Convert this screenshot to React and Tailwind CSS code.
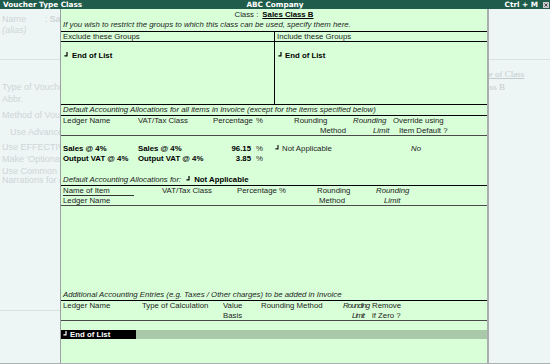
import React from "react";

function Ret() {
  return (
    <svg width="4" height="5" viewBox="0 0 4 5" className="inline-block shrink-0 self-start mt-[1px]">
      <path d="M3 0V3.8H0.4" fill="none" stroke="currentColor" strokeWidth="1.2" />
    </svg>
  );
}

function TitleBar() {
  return (
    <div className="h-[9px] shrink-0 bg-[#1f5c4b] text-white font-['DejaVu_Sans',sans-serif] font-bold text-[7.3px] leading-[9px] grid grid-cols-3 items-center">
      <div className="pl-[3px] whitespace-nowrap">Voucher Type Class</div>
      <div className="text-center whitespace-nowrap">ABC Company</div>
      <div className="flex justify-end items-center whitespace-nowrap">
        <span>Ctrl + M</span>
        <svg width="6" height="6" viewBox="0 0 6 6" className="ml-[5px] mr-[1px]">
          <rect x="0" y="0" width="6" height="6" fill="#c9cccc" />
          <path d="M1.5 1.5L4.5 4.5M4.5 1.5L1.5 4.5" stroke="#333" strokeWidth="0.9" />
        </svg>
      </div>
    </div>
  );
}

function LeftGhost() {
  return (
    <div className="w-[60px] shrink-0 overflow-hidden text-[9px] leading-[10px] text-[#cdd5d5] whitespace-nowrap flex flex-col">
      <div className="mt-[5px] flex pl-[2px]">
        <span className="w-[43px] shrink-0">Name</span>
        <span>:</span>
        <span className="ml-[2px] font-bold">Sales Class B</span>
      </div>
      <div className="mt-[1px] pl-[2px] italic">(alias)</div>
      <div className="mt-[24px] border-t border-[#d9e1e1]"></div>
      <div className="mt-[22px] pl-[2px]">Type of Voucher</div>
      <div className="mt-[2px] pl-[2px]">Abbr.</div>
      <div className="mt-[6px] pl-[2px]">Method of Voucher Numbering</div>
      <div className="mt-[7px] pl-[10px]">Use Advance Configuration</div>
      <div className="mt-[5px] pl-[2px]">Use EFFECTIVE Dates for Vouchers</div>
      <div className="mt-[2px] pl-[2px]">Make 'Optional' as default</div>
      <div className="mt-[3px] pl-[2px] leading-[9px]">Use Common Narration</div>
      <div className="pl-[2px] leading-[9px]">Narrations for each entry</div>
      <div className="mt-[125px] border-t border-[#d9e1e1]"></div>
    </div>
  );
}

function RightGhost() {
  return (
    <div className="flex-1 overflow-hidden whitespace-nowrap font-['Liberation_Serif',serif] text-[9px] leading-[10px] text-[#c3cbcb] flex flex-col">
      <div className="mt-[50px] border-t border-[#d9e1e1]"></div>
      <div className="mt-[9px] -ml-[14px] underline">Type of Class</div>
      <div className="mt-[3px] -ml-[33px]">Sales Class B</div>
    </div>
  );
}

function Panel() {
  return (
    <div className="w-[429px] shrink-0 bg-[#d9ffd9] border-l border-l-[#9aa0a0] border-r-2 border-r-[#a9adad] flex flex-col text-[7.8px] leading-[10px] text-[#1c1c1c] whitespace-nowrap">
      {/* Class header */}
      <div className="h-[11px] pt-[1px] flex justify-center">
        <span>Class :</span>
        <span className="ml-[4px] font-bold text-black underline underline-offset-[1px]">Sales Class B</span>
      </div>
      <div className="h-[12px] border-b border-black italic pl-[2px]">
        If you wish to restrict the groups to which this class can be used, specify them here.
      </div>
      {/* group headers */}
      <div className="h-[10px] border-b border-black flex leading-[9px]">
        <div className="w-[214px] shrink-0 border-r border-black pl-[2px]">Exclude these Groups</div>
        <div className="pl-[2px]">Include these Groups</div>
      </div>
      <div className="h-[63px] border-b border-black flex">
        <div className="w-[214px] shrink-0 border-r border-black pl-[3px] pt-[9px]">
          <div className="flex font-bold text-black">
            <Ret />
            <span className="ml-[4px]">End of List</span>
          </div>
        </div>
        <div className="pl-[3px] pt-[9px]">
          <div className="flex font-bold text-black">
            <Ret />
            <span className="ml-[3px]">End of List</span>
          </div>
        </div>
      </div>
      {/* Default allocations */}
      <div className="h-[11px] border-b border-black italic pl-[2px]">
        Default Accounting Allocations for all items in Invoice (except for the items specified below)
      </div>
      <div className="h-[20px] border-b border-[#4a4a4a] flex">
        <div className="w-[77px] shrink-0 pl-[2px]">Ledger Name</div>
        <div className="w-[75px] shrink-0">VAT/Tax Class</div>
        <div className="w-[38px] shrink-0 text-right">Percentage</div>
        <div className="w-[39px] shrink-0 pl-[5px]">%</div>
        <div className="w-[60px] shrink-0 flex flex-col">
          <span className="pl-[4px]">Rounding</span>
          <span className="pl-[30px]">Method</span>
        </div>
        <div className="w-[40px] shrink-0 flex flex-col italic">
          <span className="pl-[3px]">Rounding</span>
          <span className="pl-[23px]">Limit</span>
        </div>
        <div className="flex flex-col">
          <span className="pl-[3px]">Override using</span>
          <span className="pl-[9px]">Item Default ?</span>
        </div>
      </div>
      <div className="h-[39px] pt-[8px] flex flex-col">
        <div className="flex h-[10px]">
          <div className="w-[77px] shrink-0 pl-[2px] font-bold text-black">Sales @ 4%</div>
          <div className="w-[75px] shrink-0 font-bold text-black">Sales @ 4%</div>
          <div className="w-[38px] shrink-0 text-right font-bold text-black">96.15</div>
          <div className="w-[24px] shrink-0 pl-[5px]">%</div>
          <div className="w-[136px] shrink-0 flex">
            <Ret />
            <span className="ml-[3px]">Not Applicable</span>
          </div>
          <div className="italic">No</div>
        </div>
        <div className="flex h-[10px]">
          <div className="w-[77px] shrink-0 pl-[2px] font-bold text-black">Output VAT @ 4%</div>
          <div className="w-[75px] shrink-0 font-bold text-black">Output VAT @ 4%</div>
          <div className="w-[38px] shrink-0 text-right font-bold text-black">3.85</div>
          <div className="w-[24px] shrink-0 pl-[5px]">%</div>
        </div>
      </div>
      <div className="h-[11px] border-b border-black flex pl-[2px]">
        <span className="italic">Default Accounting Allocations for:</span>
        <span className="ml-[5px] flex text-black"><Ret /></span>
        <span className="ml-[4px] font-bold text-black">Not Applicable</span>
      </div>
      <div className="h-[20px] border-b border-[#4a4a4a] flex">
        <div className="w-[101px] shrink-0 flex flex-col">
          <div className="ml-[2px] w-[71px] h-[10px] leading-[9px] border-b border-[#333]">Name of Item</div>
          <span className="pl-[2px]">Ledger Name</span>
        </div>
        <div className="w-[75px] shrink-0">VAT/Tax Class</div>
        <div className="w-[42px] shrink-0">Percentage</div>
        <div className="w-[38px] shrink-0">%</div>
        <div className="w-[59px] shrink-0 flex flex-col">
          <span>Rounding</span>
          <span className="pl-[2px]">Method</span>
        </div>
        <div className="flex flex-col italic">
          <span>Rounding</span>
          <span className="pl-[8px]">Limit</span>
        </div>
      </div>
      <div className="h-[84px]"></div>
      {/* Additional entries */}
      <div className="h-[11px] border-b border-black italic pl-[2px]">
        Additional Accounting Entries (e.g. Taxes / Other charges) to be added in Invoice
      </div>
      <div className="h-[20px] border-b border-[#4a4a4a] flex">
        <div className="w-[81px] shrink-0 pl-[2px]">Ledger Name</div>
        <div className="w-[81px] shrink-0">Type of Calculation</div>
        <div className="w-[38px] shrink-0 flex flex-col">
          <span>Value</span>
          <span>Basis</span>
        </div>
        <div className="w-[82px] shrink-0">Rounding Method</div>
        <div className="w-[29px] shrink-0 flex flex-col italic tracking-[-0.9px]">
          <span>Rounding</span>
          <span className="pl-[9px]">Limit</span>
        </div>
        <div className="flex flex-col">
          <span>Remove</span>
          <span>if Zero ?</span>
        </div>
      </div>
      <div className="pt-[9px]">
        <div className="h-[9px] flex">
          <div className="w-[75px] shrink-0 bg-black text-white font-bold flex items-center pl-[2px] leading-[9px]">
            <Ret />
            <span className="ml-[3px]">End of List</span>
          </div>
          <div className="flex-1 bg-[#a9c9a9]"></div>
        </div>
      </div>
    </div>
  );
}

export default function App() {
  return (
    <div className="w-[550px] h-[364px] flex flex-col bg-[#eef5f5] font-['Liberation_Sans',Arial,sans-serif] border-b border-[#a8b0b0] overflow-hidden">
      <TitleBar />
      <div className="flex h-[354px]">
        <LeftGhost />
        <Panel />
        <RightGhost />
      </div>
    </div>
  );
}
